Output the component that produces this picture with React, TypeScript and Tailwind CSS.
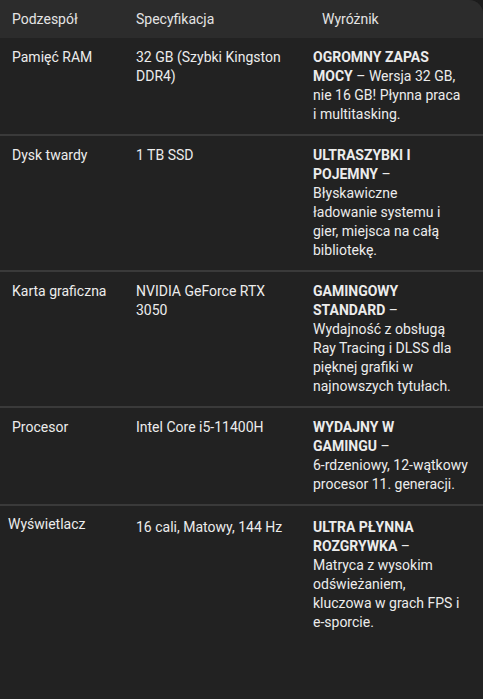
const rows = [
  {
    part: "Pamięć RAM",
    spec: "32 GB (Szybki Kingston DDR4)",
    lead: "OGROMNY ZAPAS MOCY",
    rest: "Wersja 32 GB, nie 16 GB! Płynna praca i multitasking.",
  },
  {
    part: "Dysk twardy",
    spec: "1 TB SSD",
    lead: "ULTRASZYBKI I POJEMNY",
    rest: "Błyskawiczne ładowanie systemu i gier, miejsca na całą bibliotekę.",
  },
  {
    part: "Karta graficzna",
    spec: "NVIDIA GeForce RTX 3050",
    lead: "GAMINGOWY STANDARD",
    rest: "Wydajność z obsługą Ray Tracing i DLSS dla pięknej grafiki w najnowszych tytułach.",
  },
  {
    part: "Procesor",
    spec: "Intel Core i5-11400H",
    lead: "WYDAJNY W\nGAMINGU",
    rest: "6-rdzeniowy, 12-wątkowy procesor 11. generacji.",
    wide: true,
  },
  {
    part: "Wyświetlacz",
    spec: "16 cali, Matowy, 144 Hz",
    lead: "ULTRA PŁYNNA ROZGRYWKA",
    rest: "Matryca z wysokim odświeżaniem, kluczowa w grach FPS i e-sporcie.",
  },
];

// keep hyphenated words whole, like the original renderer does
function NoBreakHyphens({ text }: { text: string }) {
  return (
    <>
      {text.split(" ").map((w, i) => (
        <span key={i}>
          {i > 0 && " "}
          {w.includes("-") ? <span className="whitespace-nowrap">{w}</span> : w}
        </span>
      ))}
    </>
  );
}

export default function App() {
  return (
    <main
      className="w-full h-[699px] bg-[#1c1c1c] overflow-hidden text-[14px] leading-[19px] text-[#ececec] antialiased"
      style={{ fontFamily: "Roboto, 'Noto Sans', sans-serif" }}
    >
      <div className="w-full h-full bg-[#222222] rounded-tr-[14px] overflow-hidden">
        {/* header */}
        <div className="grid grid-cols-[124px_177px_1fr] h-[38px] items-center bg-[#2c2c2c] text-[#e4e4e4]">
          <div className="px-3">Podzespół</div>
          <div className="px-3">Specyfikacja</div>
          <div className="pl-[21px] pr-3">Wyróżnik</div>
        </div>

        {rows.map((row, i) => (
          <div
            key={row.part}
            className={`grid grid-cols-[124px_177px_1fr] ${i > 0 ? "border-t-2 border-[#3a3a3a]" : ""} ${i === rows.length - 1 ? "pt-3 pb-2.5" : "py-2.5"}`}
          >
            <div className={i === rows.length - 1 ? "pl-2 pr-3 -mt-[3px]" : "px-3"}>{row.part}</div>
            <div className="px-3">
              <NoBreakHyphens text={row.spec} />
            </div>
            <div className={row.wide ? "pl-3 pr-3" : "pl-3 pr-[20px]"}>
              <span className="font-bold whitespace-pre-line">{row.lead}</span> –
              {row.wide ? <br /> : " "}
              <NoBreakHyphens text={row.rest} />
            </div>
          </div>
        ))}
      </div>
    </main>
  );
}
